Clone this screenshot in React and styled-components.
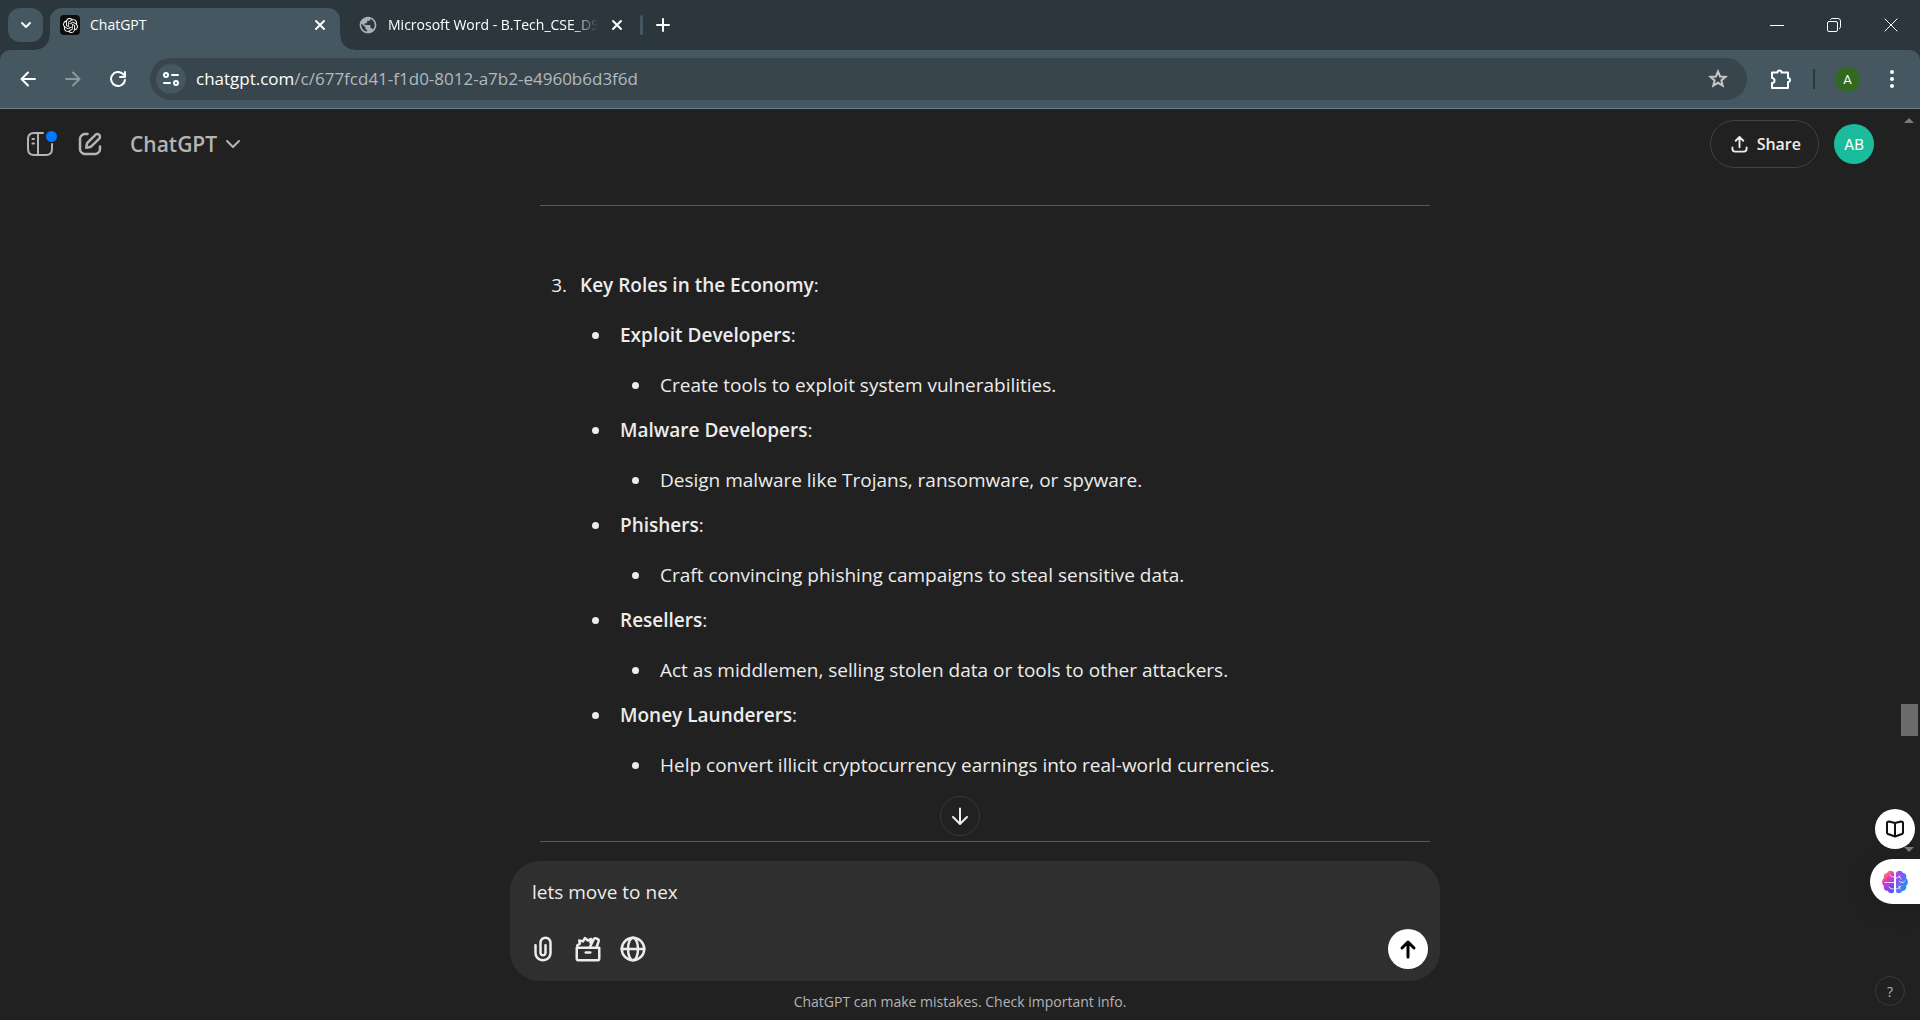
import React from "react";
import styled, { createGlobalStyle, css } from "styled-components";
import { SiOpenai } from "react-icons/si";
import { MdPublic } from "react-icons/md";

const uiFont = `"Segoe UI", "Open Sans", "Noto Sans", sans-serif`;

const GlobalStyle = createGlobalStyle`
  *, *::before, *::after { box-sizing: border-box; }
  body { margin: 0; background: #212121; font-family: ${uiFont}; color: #ececec; }
  button { font: inherit; color: inherit; background: none; border: 0; padding: 0; }
  svg { display: block; }
`;

const Window = styled.div`
  display: flex;
  flex-direction: column;
  height: 100vh;
  min-width: 1000px;
  overflow: hidden;
`;

/* Browser frame */
const TabStrip = styled.div`
  display: flex;
  align-items: flex-start;
  height: 50px;
  padding: 8px 0 0 8px;
  background: #2c373d;
  color: #fff;
`;

const IconButton = styled.button`
  display: flex;
  align-items: center;
  justify-content: center;
  flex: none;
  width: ${(p) => p.$w || 40}px;
  height: ${(p) => p.$h || 40}px;
  border-radius: ${(p) => p.$radius || 0}px;
  background: ${(p) => p.$bg || "transparent"};
  color: ${(p) => p.$color || "inherit"};
`;

const Tab = styled.div`
  position: relative;
  display: flex;
  align-items: center;
  width: ${(p) => p.$w}px;
  height: ${(p) => (p.$active ? 42 : 34)}px;
  padding: ${(p) => (p.$active ? "0 8px 8px 10px" : "0 8px 0 18px")};
  border-radius: 12px 12px 0 0;
  background: ${(p) => (p.$active ? "#455760" : "transparent")};
  ${(p) =>
    p.$active &&
    css`
      margin-left: 7px;
      &::before,
      &::after {
        content: "";
        position: absolute;
        bottom: 0;
        width: 14px;
        height: 14px;
      }
      &::before {
        right: 100%;
        background: radial-gradient(circle at 0 0, transparent 13px, #455760 14px);
      }
      &::after {
        left: 100%;
        background: radial-gradient(circle at 100% 0, transparent 13px, #455760 14px);
      }
    `}
`;

const Favicon = styled.span`
  display: flex;
  align-items: center;
  justify-content: center;
  flex: none;
  width: 20px;
  height: 20px;
  border-radius: 4px;
  background: ${(p) => p.$bg || "transparent"};
  color: ${(p) => p.$color || "#fff"};
`;

const TabTitle = styled.span`
  flex: 1;
  min-width: 0;
  margin-left: ${(p) => p.$gap}px;
  font-size: 14px;
  line-height: 20px;
  white-space: nowrap;
  overflow: hidden;
  ${(p) => p.$fade && "mask-image: linear-gradient(to right, #000 86%, transparent 98%);"}
`;

const TabDivider = styled.span`
  width: 3px;
  height: 20px;
  margin: 7px 2px 0 0;
  border-radius: 2px;
  background: #455760;
`;

const Spacer = styled.span`
  flex: 1;
`;

const WindowButtons = styled.div`
  display: flex;
  margin-top: -8px;
`;

const ToolbarBack = styled.div`
  background: #2c373d;
`;

const Toolbar = styled.div`
  display: flex;
  align-items: center;
  height: 59px;
  padding: 0 8px;
  border-radius: 10px 10px 0 0;
  border-bottom: 1px solid #6a7f89;
  background: #455760;
  color: #fff;
`;

const NavButtons = styled.div`
  display: flex;
  gap: 5px;
  margin-right: 12px;
`;

const AddressBar = styled.div`
  display: flex;
  align-items: center;
  flex: 1;
  height: 42px;
  margin-right: 14px;
  padding: 0 9px 0 6px;
  border-radius: 21px;
  background: #39454c;
`;

const Address = styled.a`
  flex: 1;
  margin-left: 10px;
  font-size: 17px;
  line-height: 24px;
  color: #fff;
  text-decoration: none;
  white-space: nowrap;
  overflow: hidden;
`;

const AddressPath = styled.span`
  color: #b0bac0;
`;

const ToolbarDivider = styled.span`
  width: 2px;
  height: 20px;
  margin: 0 12px;
  background: #2c373d;
`;

const Profile = styled.button`
  width: 25px;
  height: 25px;
  margin: 0 12px 0 8px;
  border-radius: 50%;
  background: #33691e;
  font-family: Roboto, sans-serif;
  font-size: 13px;
`;

/* Chat page */
const Page = styled.main`
  position: relative;
  display: flex;
  flex-direction: column;
  flex: 1;
  min-height: 0;
  background: #212121;
`;

const Header = styled.header`
  display: flex;
  align-items: center;
  flex: none;
  height: 70px;
  padding: 0 46px 0 15px;
  color: #b4b4b4;
`;

const SidebarButton = styled(IconButton)`
  position: relative;
  &::after {
    content: "";
    position: absolute;
    top: 12px;
    right: 8px;
    width: 11px;
    height: 11px;
    border-radius: 50%;
    background: #0078ff;
  }
`;

const ModelButton = styled.button`
  display: flex;
  align-items: center;
  gap: 9px;
  margin-left: 15px;
  font-size: 21px;
  line-height: 35px;
  font-weight: 600;
`;

const ShareButton = styled.button`
  display: flex;
  align-items: center;
  gap: 9px;
  height: 48px;
  margin-right: 15px;
  padding: 0 17px 0 20px;
  border: 1px solid #424242;
  border-radius: 24px;
  color: #ececec;
  font-size: 16px;
  font-weight: 600;
`;

const Avatar = styled.button`
  width: 40px;
  height: 40px;
  border-radius: 50%;
  background: #1abc9c;
  color: #fff;
  font-family: Inter, sans-serif;
  font-size: 15px;
`;

const Thread = styled.section`
  flex: 1;
  min-height: 0;
  overflow: hidden;
  padding: 26px 0 0 50px;
`;

const Article = styled.article`
  max-width: 890px;
  margin: 0 auto;
  font-size: 19px;
  line-height: 35px;
`;

const Rule = styled.hr`
  height: 1px;
  margin: 0;
  border: 0;
  background: #5a5a5a;
`;

const Outline = styled.ol`
  margin: 62px 0 58px;
  padding-left: 32px;
  & > li {
    padding-left: 8px;
  }
`;

const Bullets = styled.ul`
  margin: 15px 0 0;
  padding-left: 32px;
  list-style: disc;
`;

const Bullet = styled.li`
  padding-left: 8px;
  & + & {
    margin-top: 10px;
  }
`;

const Strong = styled.strong`
  font-weight: 600;
`;

const Footer = styled.footer`
  position: relative;
  flex: none;
  padding-bottom: 8px;
`;

const ComposerWrap = styled.div`
  padding-left: 30px;
`;

const Composer = styled.form`
  display: flex;
  flex-direction: column;
  justify-content: space-between;
  max-width: 930px;
  height: 120px;
  margin: 0 auto;
  padding: 14px 12px 12px 22px;
  border-radius: 30px;
  background: #2f2f2f;
`;

const Prompt = styled.input`
  width: 100%;
  padding: 0;
  border: 0;
  outline: 0;
  background: none;
  color: #ececec;
  font-family: ${uiFont};
  font-size: 19px;
  line-height: 35px;
  height: 35px;
`;

const ComposerRow = styled.div`
  display: flex;
  align-items: center;
  gap: 5px;
  margin-left: -9px;
`;

const Disclaimer = styled.p`
  margin: 11px 0 0;
  color: #b4b4b4;
  font-size: 14px;
  line-height: 20px;
  text-align: center;
`;

const ScrollDown = styled(IconButton)`
  position: absolute;
  top: -65px;
  left: 50%;
  transform: translateX(-50%);
  border: 1px solid #383838;
  border-radius: 50%;
  background: #212121;
`;

const Scrollbar = styled.div`
  position: absolute;
  top: 0;
  right: 2px;
  bottom: 0;
  width: 17px;
`;

const Thumb = styled.span`
  position: absolute;
  top: 595px;
  width: 17px;
  height: 32px;
  background: #6b6b6b;
`;

const Arrow = styled.span`
  position: absolute;
  right: 4px;
  top: ${(p) => (p.$down ? 738 : 9)}px;
  border: 5px solid transparent;
  border-top-width: ${(p) => (p.$down ? 5 : 0)}px;
  border-bottom-width: ${(p) => (p.$down ? 0 : 5)}px;
  border-${(p) => (p.$down ? "top" : "bottom")}-color: #7a7a7a;
`;

const Dock = styled.aside`
  position: absolute;
  right: 0;
  bottom: 116px;
  display: flex;
  flex-direction: column;
  align-items: flex-end;
  gap: 10px;
`;

const ReaderButton = styled(IconButton)`
  margin-right: 5px;
  border-radius: 50%;
`;

const BrainButton = styled(IconButton)`
  border-radius: 23px 0 0 23px;
  box-shadow: 0 4px 24px rgba(0, 0, 0, 0.12);
`;

const HelpButton = styled(IconButton)`
  position: absolute;
  right: 15px;
  bottom: 14px;
  border: 1px solid #3a3a3a;
  border-radius: 50%;
  color: #b4b4b4;
  font-size: 14px;
`;

const Icon = ({ size = 24, box = 24, width = 2, children }) => (
  <svg width={size} height={size} viewBox={`0 0 ${box} ${box}`} fill="none" stroke="currentColor"
    strokeWidth={width} strokeLinecap="round" strokeLinejoin="round" aria-hidden="true">
    {children}
  </svg>
);

const CloseIcon = () => (
  <Icon size={12} box={12} width={2}><path d="M2 2l8 8M10 2l-8 8" /></Icon>
);

const PaperclipIcon = () => (
  <svg width="30" height="30" viewBox="0 0 24 24" fill="currentColor" aria-hidden="true">
    <path fillRule="evenodd" clipRule="evenodd" d="M9 7C9 4.23858 11.2386 2 14 2C16.7614 2 19 4.23858 19 7V15C19 18.866 15.866 22 12 22C8.13401 22 5 18.866 5 15V9C5 8.44772 5.44772 8 6 8C6.55228 8 7 8.44772 7 9V15C7 17.7614 9.23858 20 12 20C14.7614 20 17 17.7614 17 15V7C17 5.34315 15.6569 4 14 4C12.3431 4 11 5.34315 11 7V15C11 15.5523 11.4477 16 12 16C12.5523 16 13 15.5523 13 15V9C13 8.44772 13.4477 8 14 8C14.5523 8 15 8.44772 15 9V15C15 16.6569 13.6569 18 12 18C10.3431 18 9 16.6569 9 15V7Z" />
  </svg>
);

const ToolboxIcon = () => (
  <Icon size={30} width={2}>
    <path d="M3 11h18v8.500c0 .8-.6 1.500-1.500 1.500h-15c-.9 0-1.500-.7-1.500-1.500z" />
    <path d="M10.200 14.800h3.600" />
    <path d="M3.500 10.500V9l2-1.200-.5-2.600 3 .7L9.500 3.200 11.800 5.200 14.500 4l-.6 2.800" />
    <path d="M13.500 10.500l3-6.200q.6-1.300 1.900-.8l1.200.5q1.300.6.9 1.900l-1.500 4.300" />
  </Icon>
);

const GlobeIcon = () => (
  <Icon size={30} width={2}>
    <circle cx="12" cy="12" r="9" />
    <ellipse cx="12" cy="12" rx="4" ry="9" />
    <path d="M3 12h18" />
  </Icon>
);

const BrainIcon = () => (
  <svg width="26" height="24" viewBox="0 0 26 24" fill="none" aria-hidden="true">
    <defs>
      <linearGradient id="brainLeft" x1="0" y1="0" x2=".5" y2="1">
        <stop offset=".14" stopColor="#ff9a2e" /><stop offset=".46" stopColor="#e935c0" /><stop offset="1" stopColor="#5a50f5" />
      </linearGradient>
      <linearGradient id="brainRight" x1="0" y1="0" x2="1" y2="1">
        <stop offset="0" stopColor="#c13ae6" /><stop offset=".8" stopColor="#1e90ff" />
      </linearGradient>
    </defs>
    <path fill="url(#brainLeft)" d="M12 3C11 0 6 0 5 3C2 3 1 6 2 8C-.5 10-.5 14 2 16C1 19 3 21 6 21C7 24 12 24 12 21z" />
    <path fill="url(#brainRight)" d="M14 3C15 0 20 0 21 3C24 3 25 6 24 8C26.500 10 26.500 14 24 16C25 19 23 21 20 21C19 24 14 24 14 21z" />
    <g stroke="#fff" strokeWidth="1" strokeOpacity=".8" strokeLinecap="round">
      <path d="M3 12.500h9M12 7c-2 0-3 0-4-2M12 19c-2 0-4 0-5-2M14 8c2 0 3-1 4-2M17 6l2 3M17 11c2 2 4 2 6 0M14 19c2 0 3-1 5-3M17 16l1 3" />
    </g>
  </svg>
);

const ROLES = [
  ["Exploit Developers", "Create tools to exploit system vulnerabilities."],
  ["Malware Developers", "Design malware like Trojans, ransomware, or spyware."],
  ["Phishers", "Craft convincing phishing campaigns to steal sensitive data."],
  ["Resellers", "Act as middlemen, selling stolen data or tools to other attackers."],
  ["Money Launderers", "Help convert illicit cryptocurrency earnings into real-world currencies."],
];

export default function App() {
  return (
    <Window>
      <GlobalStyle />
      <TabStrip>
        <IconButton $w={35} $h={34} $radius={12} $bg="#455760" aria-label="Search tabs">
          <Icon size={12} box={12}><path d="M2 4l4 4 4-4" /></Icon>
        </IconButton>
        <Tab $active $w={290}>
          <Favicon $bg="#0d0d0d"><SiOpenai size={15} /></Favicon>
          <TabTitle $gap={10}>ChatGPT</TabTitle>
          <IconButton $w={24} $h={24} aria-label="Close tab"><CloseIcon /></IconButton>
        </Tab>
        <Tab $w={300}>
          <Favicon $color="#a9afb4"><MdPublic size={20} /></Favicon>
          <TabTitle $gap={10} $fade>Microsoft Word - B.Tech_CSE_DS</TabTitle>
          <IconButton $w={30} $h={24} aria-label="Close tab"><CloseIcon /></IconButton>
        </Tab>
        <TabDivider />
        <IconButton $w={36} $h={34} aria-label="New tab">
          <Icon size={14} box={14}><path d="M7 1v12M1 7h12" /></Icon>
        </IconButton>
        <Spacer />
        <WindowButtons>
          <IconButton $w={57} $h={49} aria-label="Minimize"><Icon size={14} box={14} width={1}><path d="M.5 7.500h13" /></Icon></IconButton>
          <IconButton $w={57} $h={49} aria-label="Restore">
            <Icon size={14} box={14} width={1}><rect x=".5" y="3.500" width="10" height="10" rx="1.500" /><path d="M3.500 1.500c.4-.6 1-1 1.700-1H11c1.400 0 2.500 1.100 2.500 2.500v5.800c0 .7-.4 1.300-1 1.700" /></Icon>
          </IconButton>
          <IconButton $w={58} $h={49} aria-label="Close window"><Icon size={14} box={14} width={1}><path d="M1 1l12 12M13 1L1 13" /></Icon></IconButton>
        </WindowButtons>
      </TabStrip>
      <ToolbarBack>
        <Toolbar>
          <NavButtons>
            <IconButton aria-label="Back"><Icon size={16} box={16}><path d="M15 8H2M8 1.500L1.500 8 8 14.500" /></Icon></IconButton>
            <IconButton $color="#8a979e" aria-label="Forward"><Icon size={16} box={16}><path d="M1 8h13M8 1.500L14.500 8 8 14.500" /></Icon></IconButton>
            <IconButton aria-label="Reload"><Icon size={16} box={16}><path d="M15 9a7 7 0 1 1-2-6l2 2M15 1v5h-5" /></Icon></IconButton>
          </NavButtons>
          <AddressBar>
            <IconButton $w={30} $h={30} $radius={15} $bg="#455760" aria-label="Site information">
              <Icon size={16} box={16}><circle cx="3" cy="4" r="2" /><path d="M9 4h6M1 12h6" /><circle cx="13" cy="12" r="2" /></Icon>
            </IconButton>
            <Address href="#">chatgpt.com<AddressPath>/c/677fcd41-f1d0-8012-a7b2-e4960b6d3f6d</AddressPath></Address>
            <IconButton $color="#c4c7c5" aria-label="Bookmark">
              <Icon size={20} box={20} width={2}><path strokeLinejoin="miter" d="M10 2.500l2.100 5 5.400.4-4.100 3.500 1.300 5.300-4.700-2.900-4.700 2.900 1.300-5.300-4.100-3.500 5.400-.4z" /></Icon>
            </IconButton>
          </AddressBar>
          <IconButton aria-label="Extensions">
            <Icon size={22} box={22}><path d="M2 4.500h5.500a2 2 0 0 1 4 0H18v5.500a2 2 0 0 1 0 4V20H2v-5a2.500 2.500 0 0 0 0-5z" /></Icon>
          </IconButton>
          <ToolbarDivider />
          <Profile>A</Profile>
          <IconButton aria-label="Menu">
            <svg width="4" height="18" viewBox="0 0 4 18" fill="currentColor"><circle cx="2" cy="2" r="2" /><circle cx="2" cy="9" r="2" /><circle cx="2" cy="16" r="2" /></svg>
          </IconButton>
        </Toolbar>
      </ToolbarBack>

      <Page>
        <Header>
          <SidebarButton $w={50} $h={50} aria-label="Open sidebar">
            <Icon size={28} box={28} width={2}><path d="M17 3H8Q2 3 2 9v10q0 6 6 6h12q6 0 6-6v-5M12 3v22M6.500 9h1.500M6.500 13.500h1.500" /></Icon>
          </SidebarButton>
          <IconButton $w={50} $h={50} aria-label="New chat">
            <svg width="30" height="30" viewBox="0 0 24 24" fill="currentColor" aria-hidden="true">
              <path d="M15.6729 3.91287C16.8918 2.69392 18.8682 2.69392 20.0871 3.91287C21.3061 5.13182 21.3061 7.10813 20.0871 8.32708L14.1499 14.2643C13.3849 15.0293 12.3925 15.5255 11.3215 15.6785L9.14142 15.9899C8.82983 16.0344 8.51546 15.9297 8.29289 15.7071C8.07033 15.4845 7.96554 15.1701 8.01005 14.8586L8.32149 12.6785C8.47449 11.6075 8.97072 10.615 9.7357 9.85006L15.6729 3.91287ZM18.6729 5.32708C18.235 4.88918 17.525 4.88918 17.0871 5.32708L11.1499 11.2643C10.6909 11.7233 10.3932 12.3187 10.3014 12.9613L10.1785 13.8215L11.0386 13.6986C11.6812 13.6068 12.2767 13.3091 12.7357 12.8501L18.6729 6.91287C19.1108 6.47497 19.1108 5.76499 18.6729 5.32708ZM11 3.99929C11.0004 4.55157 10.5531 4.99963 10.0008 5.00007C9.00227 5.00084 8.29769 5.00827 7.74651 5.06064C7.20685 5.11191 6.88488 5.20117 6.63803 5.32695C6.07354 5.61457 5.6146 6.07351 5.32698 6.63799C5.19279 6.90135 5.10062 7.24904 5.05118 7.8542C5.00078 8.47105 5 9.26336 5 10.4V13.6C5 14.7366 5.00078 15.5289 5.05118 16.1457C5.10062 16.7509 5.19279 17.0986 5.32698 17.3619C5.6146 17.9264 6.07354 18.3854 6.63803 18.673C6.90138 18.8072 7.24907 18.8993 7.85423 18.9488C8.47108 18.9992 9.26339 19 10.4 19H13.6C14.7366 19 15.5289 18.9992 16.1458 18.9488C16.7509 18.8993 17.0986 18.8072 17.362 18.673C17.9265 18.3854 18.3854 17.9264 18.673 17.3619C18.7988 17.1151 18.8881 16.7931 18.9393 16.2535C18.9917 15.7023 18.9991 14.9977 18.9999 13.9992C19.0003 13.4469 19.4484 12.9995 20.0007 13C20.553 13.0004 21.0003 13.4485 20.9999 14.0007C20.9991 14.9789 20.9932 15.7808 20.9304 16.4426C20.8664 17.116 20.7385 17.7136 20.455 18.2699C19.9757 19.2107 19.2108 19.9756 18.27 20.455C17.6777 20.7568 17.0375 20.8826 16.3086 20.9421C15.6008 21 14.7266 21 13.6428 21H10.3572C9.27339 21 8.39925 21 7.69138 20.9421C6.96253 20.8826 6.32234 20.7568 5.73005 20.455C4.78924 19.9756 4.02433 19.2107 3.54497 18.2699C3.24318 17.6776 3.11737 17.0374 3.05782 16.3086C2.99998 15.6007 2.99999 14.7266 3 13.6428V10.3572C2.99999 9.27337 2.99998 8.39922 3.05782 7.69134C3.11737 6.96249 3.24318 6.3223 3.54497 5.73001C4.02433 4.7892 4.78924 4.0243 5.73005 3.54493C6.28633 3.26149 6.88399 3.13358 7.55735 3.06961C8.21919 3.00673 9.02103 3.00083 9.99922 3.00007C10.5515 2.99964 10.9996 3.447 11 3.99929Z" />
            </svg>
          </IconButton>
          <ModelButton>ChatGPT<Icon size={14} box={14}><path d="M1 4l6 6 6-6" /></Icon></ModelButton>
          <Spacer />
          <ShareButton>
            <Icon size={17} box={18} width={2}><path d="M1.500 12v1.500q0 3 3 3h9q3 0 3-3V12M9 12V1.500M5 5l4-4 4 4" /></Icon>
            Share
          </ShareButton>
          <Avatar>AB</Avatar>
        </Header>

        <Thread>
          <Article>
            <Rule />
            <Outline start={3}>
              <li>
                <Strong>Key Roles in the Economy</Strong>:
                <Bullets>
                  {ROLES.map(([role, detail]) => (
                    <Bullet key={role}>
                      <Strong>{role}</Strong>:
                      <Bullets>
                        <Bullet>{detail}</Bullet>
                      </Bullets>
                    </Bullet>
                  ))}
                </Bullets>
              </li>
            </Outline>
            <Rule />
          </Article>
        </Thread>

        <Footer>
          <ScrollDown $w={40} $h={40} aria-label="Scroll to bottom">
            <Icon size={18} box={18}><path d="M9 1.500v15M2 10l7 7 7-7" /></Icon>
          </ScrollDown>
          <ComposerWrap>
            <Composer onSubmit={(e) => e.preventDefault()}>
              <Prompt aria-label="Message ChatGPT" defaultValue="lets move to nex" />
              <ComposerRow>
                <IconButton type="button" aria-label="Attach files"><PaperclipIcon /></IconButton>
                <IconButton type="button" aria-label="View tools"><ToolboxIcon /></IconButton>
                <IconButton type="button" aria-label="Search the web"><GlobeIcon /></IconButton>
                <Spacer />
                <IconButton $bg="#fff" $color="#000" $radius={20} aria-label="Send prompt">
                  <Icon size={20} box={20} width={3}><path d="M10 18V3M4 9l6-6 6 6" /></Icon>
                </IconButton>
              </ComposerRow>
            </Composer>
          </ComposerWrap>
          <Disclaimer>ChatGPT can make mistakes. Check important info.</Disclaimer>
        </Footer>

        <Dock>
          <ReaderButton $bg="#fff" $color="#111" aria-label="Reader">
            <Icon size={18} box={18} width={2}><path d="M9 3v13M9 3L3 1.500Q1 1.500 1 3v9.500q0 1 1 1.500l7 2.500 7-2.500q1-.5 1-1.500V3q0-1.500-2-1.500z" /></Icon>
          </ReaderButton>
          <BrainButton $w={50} $h={45} $bg="#fff" aria-label="Assistant"><BrainIcon /></BrainButton>
        </Dock>
        <Scrollbar>
          <Arrow />
          <Thumb />
          <Arrow $down />
        </Scrollbar>
        <HelpButton $w={30} $h={30} aria-label="Help">?</HelpButton>
      </Page>
    </Window>
  );
}
